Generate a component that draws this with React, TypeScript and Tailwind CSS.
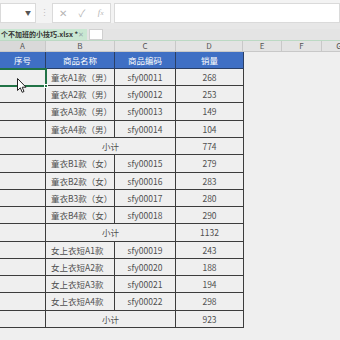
import React from "react";

type Row =
  | { kind: "item"; name: string; code: string; qty: string; h: string }
  | { kind: "sub"; qty: string; h: string };

const rows: Row[] = [
  { kind: "item", name: "童衣A1款（男）", code: "sfy00011", qty: "268", h: "h-[17px]" },
  { kind: "item", name: "童衣A2款（男）", code: "sfy00012", qty: "253", h: "h-[17px]" },
  { kind: "item", name: "童衣A3款（男）", code: "sfy00013", qty: "149", h: "h-[18px]" },
  { kind: "item", name: "童衣A4款（男）", code: "sfy00014", qty: "104", h: "h-[17px]" },
  { kind: "sub", qty: "774", h: "h-[17px]" },
  { kind: "item", name: "童衣B1款（女）", code: "sfy00015", qty: "279", h: "h-[18px]" },
  { kind: "item", name: "童衣B2款（女）", code: "sfy00016", qty: "283", h: "h-[17px]" },
  { kind: "item", name: "童衣B3款（女）", code: "sfy00017", qty: "280", h: "h-[17px]" },
  { kind: "item", name: "童衣B4款（女）", code: "sfy00018", qty: "290", h: "h-[17px]" },
  { kind: "sub", qty: "1132", h: "h-[18px]" },
  { kind: "item", name: "女上衣短A1款", code: "sfy00019", qty: "243", h: "h-[17px]" },
  { kind: "item", name: "女上衣短A2款", code: "sfy00020", qty: "188", h: "h-[17px]" },
  { kind: "item", name: "女上衣短A3款", code: "sfy00021", qty: "194", h: "h-[17px]" },
  { kind: "item", name: "女上衣短A4款", code: "sfy00022", qty: "298", h: "h-[18px]" },
  { kind: "sub", qty: "923", h: "h-[17px]" },
];

const font = { fontFamily: '"Noto Sans CJK SC", "Noto Sans", sans-serif' };

export default function App() {
  return (
    <div className="w-[340px] h-[340px] overflow-hidden bg-[#efefef] relative" style={font}>
      {/* toolbar */}
      <div className="h-[23px] bg-[#f3f3f3] flex items-center pt-[2px]">
        <div className="w-[36px] h-[20px] bg-white border border-[#dadada] flex items-center justify-end pr-[4px] text-[6px] text-[#555]">
          ▼
        </div>
        <div className="w-[16px] flex justify-center text-[#c0c0c0] text-[9px]">⋮</div>
        <div className="w-[59px] h-[20px] bg-white border border-[#dadada] flex items-center text-[#b5b5b5]">
          <span className="w-[19px] text-center text-[10px] ml-[1px]">✕</span>
          <span className="w-[19px] text-center text-[10px]">✓</span>
          <span className="w-[19px] text-center text-[9px] italic" style={{ fontFamily: '"Liberation Serif", serif' }}>
            f<span className="text-[7px]">x</span>
          </span>
        </div>
        <div className="ml-[3px] flex-1 h-[20px] bg-white border border-[#dadada]" />
      </div>
      {/* gray band */}
      <div className="h-[6px] bg-[#e7e7e7]" />
      {/* tab bar */}
      <div className="h-[11px] bg-[#e4e4e4] flex items-stretch">
        <div className="w-[87px] bg-[#c9e7d2] flex items-center whitespace-nowrap text-[7px] font-bold text-[#333] leading-none">
          <span className="pl-[1px]">个不加班的小技巧.xlsx *</span>
          <span className="ml-auto mr-[5px] text-[#9aa] font-normal text-[7px]">✕</span>
        </div>
        <div className="ml-[2px] w-[14px] bg-white border border-[#d0d0d0]" />
      </div>
      {/* column headers */}
      <div className="h-[12px] bg-[#e3e3e3] flex text-[8px] text-[#555] leading-none border-t border-[#bcd9c4] border-b border-b-[#c8c8c8]">
        <div className="w-[46px] shrink-0 bg-[#d9d9d9] flex items-center justify-center border-r border-[#c8c8c8]">A</div>
        <div className="w-[69px] shrink-0 flex items-center justify-center border-r border-[#c8c8c8]">B</div>
        <div className="w-[61px] shrink-0 flex items-center justify-center border-r border-[#c8c8c8]">C</div>
        <div className="w-[67px] shrink-0 flex items-center justify-center border-r border-[#c8c8c8]">D</div>
        <div className="w-[39px] shrink-0 flex items-center justify-center border-r border-[#c8c8c8]">E</div>
        <div className="w-[40px] shrink-0 flex items-center justify-center border-r border-[#c8c8c8]">F</div>
        <div className="w-[34px] shrink-0 flex items-center justify-center">G</div>
      </div>
      {/* table */}
      <div className="w-[244px] flex flex-col text-[8.5px] leading-none text-[#505050]">
        <div className="h-[17px] flex bg-[#3f6fc4] text-white border-b border-[#2a3f66]">
          <div className="w-[46px] flex items-center justify-center border-r border-[#2a3f66]">序号</div>
          <div className="w-[69px] flex items-center justify-center border-r border-[#2a3f66]">商品名称</div>
          <div className="w-[61px] flex items-center justify-center border-r border-[#2a3f66]">商品编码</div>
          <div className="w-[68px] flex items-center justify-center border-r border-[#2a3f66]">销量</div>
        </div>
        {rows.map((r, i) => (
          <div key={i} className={`${r.h} flex border-b border-[#3c3c3c]`}>
            <div className="w-[46px] border-r border-[#3c3c3c]" />
            {r.kind === "item" ? (
              <>
                <div className="w-[69px] flex items-center pl-[5px] border-r border-[#3c3c3c] whitespace-nowrap">{r.name}</div>
                <div className="w-[61px] flex items-center justify-center border-r border-[#3c3c3c]">{r.code}</div>
              </>
            ) : (
              <div className="w-[130px] flex items-center justify-center border-r border-[#3c3c3c]">小计</div>
            )}
            <div className="w-[68px] flex items-center justify-center border-r border-[#3c3c3c]">{r.qty}</div>
          </div>
        ))}
      </div>
      {/* selection */}
      <div className="absolute left-0 top-[68px] w-[47px] h-[19px] border-2 border-[#217346] border-l-0 pointer-events-none" />
      <div className="absolute left-[44px] top-[84px] w-[4px] h-[4px] bg-[#217346] border border-white" />
      {/* cursor */}
      <svg className="absolute left-[17px] top-[78px]" width="10" height="16" viewBox="0 0 10 16">
        <path d="M0.5 0.5 L0.5 12.5 L3.3 9.8 L5.2 14.3 L7 13.5 L5.2 9.2 L9 9.2 Z" fill="white" stroke="#222" strokeWidth="1" strokeLinejoin="round" />
      </svg>
    </div>
  );
}
